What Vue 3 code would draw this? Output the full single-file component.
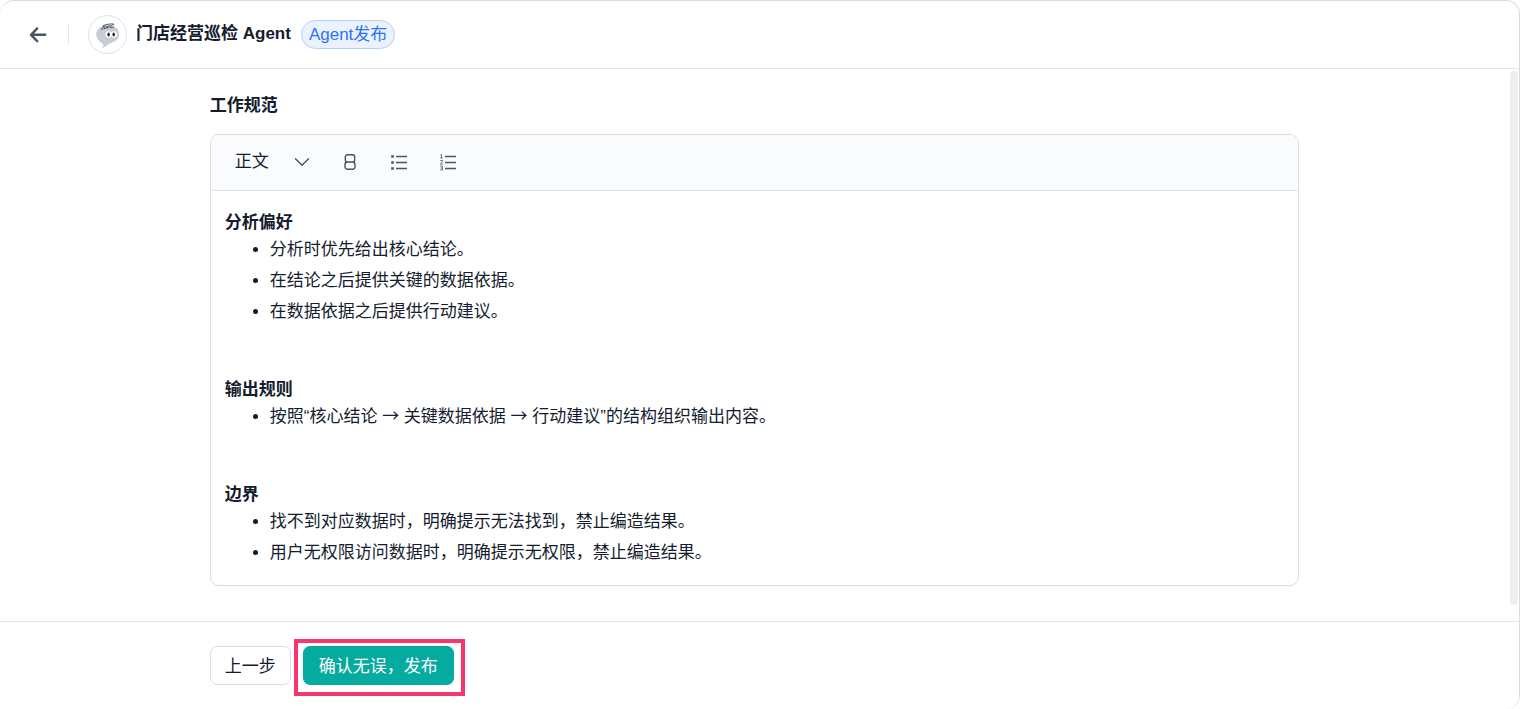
<script setup>
const title = '门店经营巡检 Agent'
const sections = [
  {
    heading: '分析偏好',
    items: ['分析时优先给出核心结论。', '在结论之后提供关键的数据依据。', '在数据依据之后提供行动建议。'],
  },
  {
    heading: '输出规则',
    items: ['按照“核心结论 → 关键数据依据 → 行动建议”的结构组织输出内容。'],
  },
  {
    heading: '边界',
    items: ['找不到对应数据时，明确提示无法找到，禁止编造结果。', '用户无权限访问数据时，明确提示无权限，禁止编造结果。'],
  },
]

// Arrows are kept as separate parts so they can use the wider CJK glyph.
const parts = (text) => text.split(/(→)/)
</script>

<template>
  <div class="page">
    <header class="header">
      <button class="icon-button" type="button" aria-label="返回">
        <svg width="18" height="18" viewBox="0 0 18 18" fill="none" stroke="#4b5264" stroke-width="2.4" stroke-linecap="round" stroke-linejoin="round">
          <path d="M16.200 8.800H2.200M8.200 2.400 2 8.800l6.200 6.400" />
        </svg>
      </button>
      <span class="divider"></span>
      <span class="avatar">
        <svg width="37" height="37" viewBox="0 0 37 37">
          <path d="M7.2 18.500C7 14.500 9.500 11.500 14 10.200C20 8.300 27.500 10 29.500 14.500C31 19 29.500 24 25.500 25.600C22 27 20.500 27.500 18.500 29L13.600 32.200C13.200 31.500 14.800 29.800 14.300 28.500C12.500 26.500 7.500 24 7.200 18.500Z" fill="#c8ccd5" />
          <g fill="none" stroke="#4a4e58" stroke-width="0.900" stroke-linecap="round">
            <path d="M12.500 13.800 15 9.200M15 13c-.3-2.500 2.200-4 2.800-2.500.3 1.500-1.500 2.300-2.500 1.800M18 12.400c0-2.500 2-4 3-2.800.5 1.200-1.500 2.200-2.500 2M21.500 11.400c.2-2 2-3.300 3.500-2.600M21.500 11.400c1 .8 2.500.4 3.200-.3M14 9.800c3-1.500 7-2.200 10.500-1.800" />
          </g>
          <ellipse cx="19.500" cy="18.500" rx="3" ry="3.200" fill="#fff" />
          <ellipse cx="25" cy="18.500" rx="3" ry="3.200" fill="#fff" />
          <ellipse cx="19.600" cy="18.500" rx="1.200" ry="2" fill="#111722" />
          <ellipse cx="24.700" cy="18.500" rx="1.200" ry="2" fill="#111722" />
        </svg>
      </span>
      <h1 class="title">{{ title }}</h1>
      <span class="tag">Agent发布</span>
    </header>

    <main class="body">
      <div class="column">
        <h2 class="label">工作规范</h2>
        <div class="editor">
          <div class="toolbar">
            <button class="format" type="button">
              <span>正文</span>
              <svg width="16" height="16" viewBox="0 0 16 16" fill="none" stroke="#454c5e" stroke-width="1.300" stroke-linecap="round" stroke-linejoin="round">
                <path d="m1.500 4.800 6.500 6.400 6.500-6.400" />
              </svg>
            </button>
            <button class="tool" type="button" aria-label="加粗">
              <svg width="18" height="18" viewBox="0 0 18 18" fill="none" stroke="#4b5264" stroke-width="1.400">
                <path d="M6.500 1.800h5a2.200 2.200 0 0 1 2.200 2.200v2.800A2.200 2.200 0 0 1 11.500 9h-5a2.200 2.200 0 0 1-2.200-2.200V4a2.200 2.200 0 0 1 2.200-2.200zM6.500 9h5a2.500 2.500 0 0 1 2.500 2.500v2.200a2.500 2.500 0 0 1-2.500 2.500h-5A2.500 2.500 0 0 1 4 13.700v-2.200A2.500 2.500 0 0 1 6.500 9z" />
              </svg>
            </button>
            <button class="tool" type="button" aria-label="无序列表">
              <svg width="18" height="18" viewBox="0 0 18 18">
                <path d="M6 3.500h11M6 9.500h11M6 15.500h11" stroke="#4b5264" stroke-width="1.400" />
                <path d="M1.200 2.200h2.600v2.600H1.200zM1.200 8.200h2.600v2.600H1.200zM1.200 14.200h2.600v2.600H1.200z" fill="#4b5264" />
              </svg>
            </button>
            <button class="tool" type="button" aria-label="有序列表">
              <svg width="18" height="18" viewBox="0 0 18 18" fill="none" stroke="#4b5264">
                <path d="M6 3.500h11M6 9.500h11M6 15.500h11" stroke-width="1.400" />
                <path d="M1.300 2.200 2.500 1.500V5M1.200 5h2.600M1.300 7.500h2v1.700l-2 1.800h2.500M1.200 13h2.200v4H1.200M1.600 15h1.800" stroke-width="0.800" />
              </svg>
            </button>
          </div>
          <div class="content">
            <section v-for="s in sections" :key="s.heading" class="section">
              <h3>{{ s.heading }}</h3>
              <ul>
                <li v-for="item in s.items" :key="item"><span v-for="(part, i) in parts(item)" :key="i" :class="{ arrow: part === '→' }">{{ part }}</span></li>
              </ul>
            </section>
          </div>
        </div>
      </div>
      <span class="scroll-thumb"></span>
    </main>

    <footer class="footer">
      <div class="column actions">
        <button class="button" type="button">上一步</button>
        <span class="highlight">
          <button class="button primary" type="button">确认无误，发布</button>
        </span>
      </div>
    </footer>
  </div>
</template>

<style>
body {
  background: #fff;
}
</style>

<style scoped>
.page,
.page * {
  box-sizing: border-box;
}
.page {
  display: flex;
  flex-direction: column;
  min-height: 100vh;
  border: 1px solid #dcdcde;
  border-left-width: 0;
  border-bottom-width: 0;
  border-radius: 14px;
  background: #fff;
  color: #141c2e;
  font-family: "Liberation Sans", "Noto Sans CJK SC", sans-serif;
  font-size: 17px;
  line-height: 27px;
}
button {
  font: inherit;
  color: inherit;
  cursor: pointer;
}
h1,
h2,
h3,
ul {
  margin: 0;
  padding: 0;
  font-size: 17px;
}
.header {
  display: flex;
  align-items: center;
  height: 68px;
  padding-left: 29px;
  border-bottom: 1px solid #e3e5ec;
}
.icon-button,
.tool,
.format {
  display: flex;
  align-items: center;
  padding: 0;
  border: 0;
  background: none;
}
.divider {
  width: 1px;
  height: 19px;
  margin: 0 19px 0 21px;
  background: #e3e5ec;
}
.avatar {
  display: flex;
  width: 39px;
  height: 39px;
  border: 1px solid #dfe1ea;
  border-radius: 50%;
}
.title {
  margin-left: 9px;
  padding-bottom: 2px;
}
.tag {
  margin-left: 10px;
  padding: 0 7px;
  border: 1px solid #b3d0ff;
  border-radius: 15px;
  background: #ebf2ff;
  color: #2f73f5;
}
.body {
  position: relative;
  flex: 1;
  padding: 23px 10px 35px 0;
}
.column {
  width: 72.2%;
  margin: 0 auto;
}
.editor {
  margin-top: 15px;
  border: 1px solid #dadde6;
  border-radius: 9px;
  overflow: hidden;
}
.toolbar {
  display: flex;
  align-items: center;
  gap: 31px;
  height: 56px;
  padding: 0 24px 2px;
  border-bottom: 1px solid #e0e3ea;
  background: #fafbfd;
}
.format {
  gap: 25px;
}
.content {
  padding: 18px 14px 15px;
}
.section + .section {
  margin-top: 51px;
}
ul {
  padding-left: 45px;
}
li {
  margin-bottom: 4px;
}
.arrow {
  font-family: "Noto Sans CJK SC", sans-serif;
  line-height: 1;
}
.scroll-thumb {
  position: absolute;
  top: 2px;
  right: 1px;
  bottom: 16px;
  width: 8px;
  border-radius: 4px;
  background: #edeef0;
}
.footer {
  padding: 24px 10px 24px 0;
  border-top: 1px solid #e3e5e8;
}
.actions {
  display: flex;
  gap: 12px;
}
.button {
  height: 39px;
  padding: 2px 14px 0;
  border: 1px solid #dadde6;
  border-radius: 7px;
  background: #fff;
}
.primary {
  padding: 2px 15px 0;
  border-color: #06aba0;
  background: #06aba0;
  color: #fff;
}
.highlight {
  position: relative;
  display: flex;
}
.highlight::after {
  content: "";
  position: absolute;
  inset: -7px -11px -11px -9px;
  border: 4px solid #f5376d;
  pointer-events: none;
}
</style>
